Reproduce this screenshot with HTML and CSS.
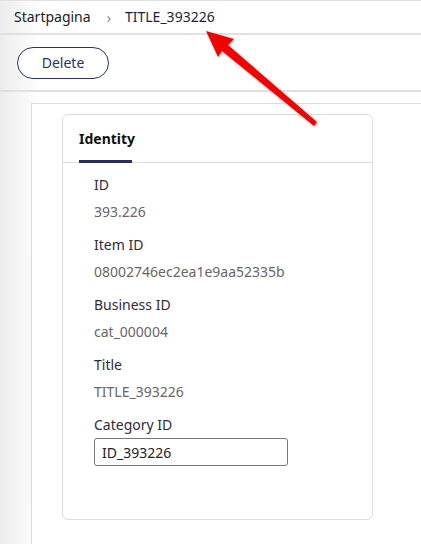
FILE: index.html
```html
<!DOCTYPE html>
<html lang="nl">
<head>
<meta charset="utf-8">
<title>TITLE_393226</title>
<link rel="stylesheet" href="styles.css">
</head>
<body>
<nav class="crumbs">
  <span class="crumb">Startpagina</span>
  <span class="sep">›</span>
  <span class="crumb current">TITLE_393226</span>
</nav>
<div class="actions">
  <button class="btn" type="button">Delete</button>
</div>
<main class="main">
  <div class="frame">
    <section class="card">
      <div class="tabs">
        <div class="tab active">Identity</div>
      </div>
      <div class="fields">
        <div class="field">
          <div class="label">ID</div>
          <div class="value">393.226</div>
        </div>
        <div class="field">
          <div class="label">Item ID</div>
          <div class="value">08002746ec2ea1e9aa52335b</div>
        </div>
        <div class="field">
          <div class="label">Business ID</div>
          <div class="value">cat_000004</div>
        </div>
        <div class="field">
          <div class="label">Title</div>
          <div class="value">TITLE_393226</div>
        </div>
        <div class="field edit">
          <label class="label" for="cat">Category ID</label>
          <input id="cat" class="input" type="text" value="ID_393226">
        </div>
      </div>
    </section>
  </div>
</main>
<svg class="arrow" width="421" height="544" viewBox="0 0 421 544" aria-hidden="true">
  <defs>
    <filter id="sh" x="-20%" y="-20%" width="140%" height="140%">
      <feDropShadow dx="1" dy="1" stdDeviation="1" flood-color="#000" flood-opacity="0.25"/>
    </filter>
  </defs>
  <polygon filter="url(#sh)" fill="#f70000" points="206,31 234,39 228,45 317,122 314,126 222,51 218,57"/>
</svg>
</body>
</html>
```
FILE: styles.css
```css
* { box-sizing: border-box; }
html, body { margin: 0; padding: 0; }
body {
  font-family: "Noto Sans", Inter, "Liberation Sans", sans-serif;
  font-size: 14px;
  color: #222;
  min-height: 544px;
  background: linear-gradient(to right, #ececec 0, #f6f6f6 22px, #ffffff 42px) fixed;
  position: relative;
  overflow: hidden;
}
.crumbs {
  height: 35px;
  border-top: 1px solid #e2e2e2;
  border-bottom: 2px solid #e0e0e0;
  display: flex;
  align-items: center;
  padding-left: 14px;
  gap: 0;
}
.crumb { color: #222; line-height: 20px; }
.sep { color: #888; margin: 0 14px 0 16px; font-size: 14px; }
.crumb.current { color: #231f3c; }
.actions {
  height: 57px;
  border-bottom: 2px solid #e0e0e0;
  display: flex;
  align-items: center;
  padding-left: 17px;
}
.btn {
  font-family: inherit;
  font-size: 14px;
  color: #2b2f6e;
  background: #fff;
  border: 1px solid #2b2f6e;
  border-radius: 16px;
  width: 92px;
  height: 32px;
  padding: 0;
}
.main { padding: 11px 0 0 31px; }
.frame {
  border-top: 1px solid #dcdcdc;
  border-left: 1px solid #dcdcdc;
  background: #fff;
  padding: 10px 0 40px 30px;
  min-height: 460px;
}
.card {
  width: 311px;
  height: 406px;
  border: 1px solid #dcdcdc;
  border-radius: 6px;
  background: #fff;
}
.tabs {
  height: 48px;
  border-bottom: 1px solid #dcdcdc;
  padding-left: 16px;
  display: flex;
}
.tab {
  font-weight: 700;
  color: #111;
  display: flex;
  align-items: center;
  height: 48px;
  padding-top: 2px;
  width: 53px;
  border-bottom: 3px solid transparent;
  margin-bottom: -1px;
}
.tab.active { border-bottom-color: #272c6b; }
.fields { padding: 12px 0 0 31px; display: flex; flex-direction: column; gap: 13px; }
.field { display: flex; flex-direction: column; gap: 7px; }
.label { color: #2f2a3a; line-height: 20px; }
.value { color: #666; line-height: 20px; }
.field.edit { gap: 3px; }
.input {
  font-family: inherit;
  font-size: 14px;
  color: #222;
  width: 194px;
  height: 28px;
  border: 1px solid #767676;
  border-radius: 3px;
  padding: 0 7px;
  background: #fff;
}
.arrow { position: absolute; left: 0; top: 0; pointer-events: none; }
```
